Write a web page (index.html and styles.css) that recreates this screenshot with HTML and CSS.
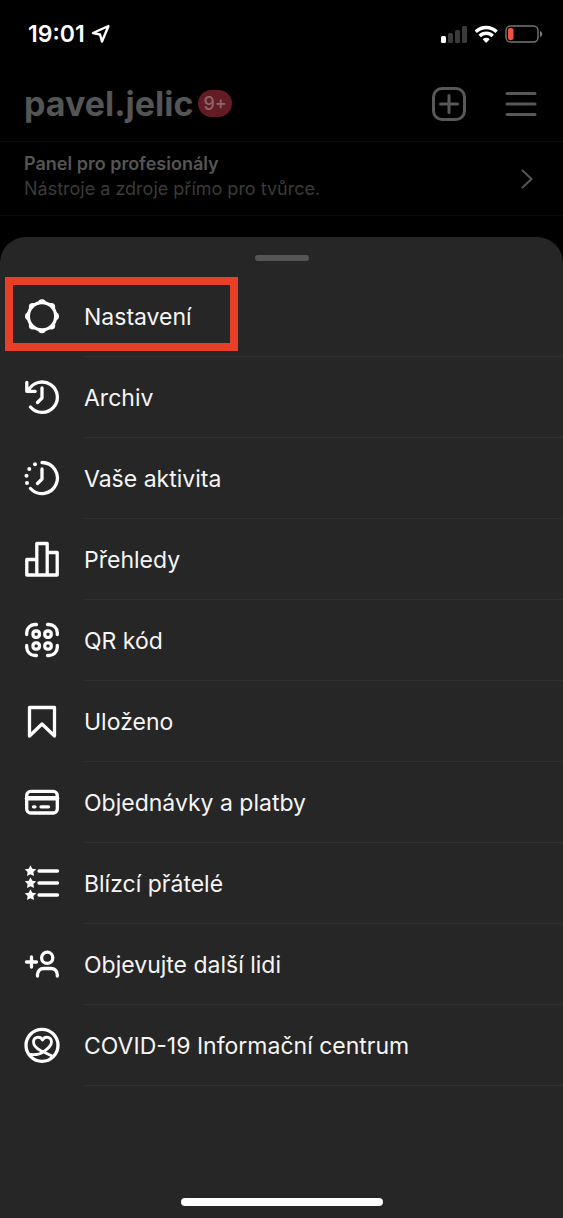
FILE: index.html
```html
<!DOCTYPE html>
<html lang="cs">
<head>
<meta charset="utf-8">
<meta name="viewport" content="width=device-width, initial-scale=1">
<title>pavel.jelic</title>
<link rel="stylesheet" href="styles.css">
</head>
<body>
<div class="screen">
  <div class="status">
    <div class="status-side">
      <span class="time">19:01</span>
      <svg width="20" height="20" viewBox="0 0 20 20" fill="none" stroke="#fff" stroke-width="2.400" stroke-linejoin="round"><path d="M17.500 2 2 9l7 1.500L11 17.500Z"/></svg>
    </div>
    <div class="status-side">
      <svg width="28" height="18" viewBox="0 0 28 18"><rect x="0" y="11" width="5" height="7" rx="1.500" fill="#fff"/><g fill="#3a3a3a"><rect x="7" y="8" width="5" height="10" rx="1.500"/><rect x="14" y="5" width="5" height="13" rx="1.500"/><rect x="21" y="1" width="5" height="17" rx="1.500"/></g></svg>
      <svg width="24" height="18" viewBox="0 0 24 18" fill="none" stroke="#fff" stroke-width="3.400"><path d="M.7 6.800a15 15 0 0 1 21 0M4.700 11a9.200 9.200 0 0 1 13 0"/><path d="M11.200 18l-3.500-3.700a5 5 0 0 1 7 0Z" fill="#fff" stroke="none"/></svg>
      <svg width="38" height="18" viewBox="0 0 38 18"><rect x="1" y="1" width="32" height="16" rx="4.500" fill="none" stroke="#777" stroke-width="1.400"/><rect x="3" y="3" width="5.500" height="12" rx="2" fill="#f15342"/><path d="M35 6c3 .8 3 5.200 0 6Z" fill="#777"/></svg>
    </div>
  </div>
  <header class="nav">
    <h1 class="name">pavel.jelic</h1>
    <span class="badge">9+</span>
    <div class="actions">
      <button class="icon-button" type="button" aria-label="Vytvořit"><svg width="34" height="34" viewBox="0 0 34 34" fill="none" stroke="#585858" stroke-width="3" stroke-linecap="round"><rect x="1.500" y="1.500" width="31" height="31" rx="8.500"/><path d="M17 8.500v17M8.500 17h17"/></svg></button>
      <button class="icon-button" type="button" aria-label="Nabídka"><svg width="32" height="34" viewBox="0 0 32 34" stroke="#585858" stroke-width="3" stroke-linecap="round"><path d="M2 6.500h28M2 17h28M2 27.500h28"/></svg></button>
    </div>
  </header>
  <a class="panel" href="#">
    <span class="panel-text"><strong class="panel-title">Panel pro profesionály</strong><span class="panel-sub">Nástroje a zdroje přímo pro tvůrce.</span></span>
    <svg width="12" height="20" viewBox="0 0 12 20" fill="none" stroke="#555" stroke-width="2" stroke-linecap="round"><path d="M1.500 1.500 10.500 10l-9 8.500"/></svg>
  </a>
  <main class="sheet">
    <div class="handle"></div>
    <ul class="menu">
      <li class="row marked"><button class="item" type="button">
        <svg class="icon" viewBox="0 0 36 36"><circle cx="18" cy="18.300" r="13.500" stroke-width="3.600"/><g class="solid"><circle cx="18" cy="5.300" r="4"/><circle cx="27.200" cy="9.100" r="4"/><circle cx="31" cy="18.300" r="4"/><circle cx="27.200" cy="27.500" r="4"/><circle cx="18" cy="31.300" r="4"/><circle cx="8.800" cy="27.500" r="4"/><circle cx="5" cy="18.300" r="4"/><circle cx="8.800" cy="9.100" r="4"/></g><circle class="hole" cx="18" cy="18.300" r="12"/></svg>
        <span class="label">Nastavení</span></button></li>
      <li class="row"><button class="item" type="button">
        <svg class="icon" viewBox="0 0 36 36"><path d="M6.500 28A15.200 15.200 0 1 0 4.500 11.500M2.800 3.500v8.800h8.400M18 9v10l-4.500 4.500"/></svg>
        <span class="label">Archiv</span></button></li>
      <li class="row"><button class="item" type="button">
        <svg class="icon" viewBox="0 0 36 36"><path d="M18 2.500a15.500 15.500 0 1 1-11.500 26M18 9v10l-4.500 4.500"/><g class="solid"><circle cx="11" cy="4.200" r="2"/><circle cx="5.300" cy="9" r="2"/><circle cx="2.500" cy="15.800" r="2"/><circle cx="3" cy="23" r="2"/></g></svg>
        <span class="label">Vaše aktivita</span></button></li>
      <li class="row"><button class="item" type="button">
        <svg class="icon" viewBox="0 0 36 36"><path d="M2.800 18.500h10V34h-10ZM12.800 2.500h10.400V34H12.800ZM23.200 11.500h10V34h-10Z"/></svg>
        <span class="label">Přehledy</span></button></li>
      <li class="row"><button class="item" type="button">
        <svg class="icon" viewBox="0 0 36 36"><path d="M12.500 2.500H11a8.300 8.300 0 0 0-8.300 8.300v1.700M23.500 2.500H25a8.300 8.300 0 0 1 8.300 8.300v1.700M12.500 33.500H11a8.300 8.300 0 0 1-8.300-8.300v-1.700M23.500 33.500H25a8.300 8.300 0 0 0 8.300-8.300v-1.700"/><rect x="9" y="9" width="6.400" height="6.400" rx="2.600"/><rect x="20.800" y="9" width="6.400" height="6.400" rx="2.600"/><rect x="9" y="20.800" width="6.400" height="6.400" rx="2.600"/><rect x="20.800" y="20.800" width="6.400" height="6.400" rx="2.600"/></svg>
        <span class="label">QR kód</span></button></li>
      <li class="row"><button class="item" type="button">
        <svg class="icon" viewBox="0 0 36 36"><path d="M5.500 4.500h25V33L18 21 5.500 33Z"/></svg>
        <span class="label">Uloženo</span></button></li>
      <li class="row"><button class="item" type="button">
        <svg class="icon" viewBox="0 0 36 36"><rect x="2.700" y="7.400" width="30.600" height="21.600" rx="4"/><path d="M3 14.200h30" stroke-width="4.500"/><path d="M9.500 22.800h1.500M17 22.800h7.500"/></svg>
        <span class="label">Objednávky a platby</span></button></li>
      <li class="row"><button class="item" type="button">
        <svg class="icon" viewBox="0 0 36 36"><path d="M15 6h18.500M15 18h18.500M15 30h18.500"/><g class="solid"><path id="star" d="M6.500.2l1.800 3.500 3.900.6-2.800 2.800.6 4-3.500-1.800L3 11.100l.6-4L.8 4.300l3.900-.6Z"/><use href="#star" y="12"/><use href="#star" y="24"/></g></svg>
        <span class="label">Blízcí přátelé</span></button></li>
      <li class="row"><button class="item" type="button">
        <svg class="icon" viewBox="0 0 36 36"><circle cx="23.200" cy="11.800" r="5.600"/><path d="M13.500 30v-1.500a6 6 0 0 1 6-6h7.800a6 6 0 0 1 6 6V30M7.500 11v10M2.500 16h10"/></svg>
        <span class="label">Objevujte další lidi</span></button></li>
      <li class="row"><button class="item" type="button">
        <svg class="icon" viewBox="0 0 36 36"><circle cx="18" cy="18.300" r="16"/><path stroke-width="2.800" d="M29 29.500 16.500 23.500C12.500 21.300 9.500 18 9.500 15c0-5 6.500-6.500 9-2 2.500-4.500 9-3 9 2 0 4-3.500 6.500-8 9.800-3.500 2.600-7 3.200-12.500 2.700"/></svg>
        <span class="label">COVID-19 Informační centrum</span></button></li>
    </ul>
    <div class="home"></div>
  </main>
</div>
</body>
</html>
```
FILE: styles.css
```css
*, *::after { box-sizing: border-box; }
body {
  margin: 0;
  background: #000;
  color: #f5f5f5;
  font-family: Inter, "Liberation Sans", sans-serif;
}
button {
  padding: 0;
  border: 0;
  background: none;
  color: inherit;
  font: inherit;
}
svg { display: block; flex: none; }
.screen {
  display: flex;
  flex-direction: column;
  min-height: 100vh;
}
.status {
  display: flex;
  justify-content: space-between;
  align-items: center;
  height: 68px;
  padding: 0 20px 0 28px;
}
.status-side { display: flex; align-items: center; gap: 6px; }
.time { color: #fff; font-size: 23px; font-weight: 600; }
.nav {
  display: flex;
  align-items: center;
  height: 74px;
  padding: 0 26px 2px 24px;
  border-bottom: 1px solid #0b0b0b;
}
.name {
  margin: 0;
  color: #555;
  font-size: 34px;
  font-weight: 700;
  line-height: 40px;
}
.badge {
  margin-left: 5px;
  padding: 0 5px;
  border-radius: 14px;
  background: #641c24;
  color: #8b6669;
  font-size: 18px;
  font-weight: 500;
  line-height: 27px;
}
.actions { display: flex; gap: 39px; margin-left: auto; }
.panel {
  display: flex;
  justify-content: space-between;
  align-items: center;
  height: 74px;
  margin-bottom: 21px;
  padding: 0 30px 0 24px;
  border-bottom: 1px solid #0b0b0b;
  color: #3b3b3b;
  text-decoration: none;
}
.panel-text { display: flex; flex-direction: column; padding-bottom: 6px; }
.panel-title { color: #555; font-size: 18px; font-weight: 600; line-height: 25px; }
.panel-sub { font-size: 18px; line-height: 25px; }
.sheet {
  display: flex;
  flex: 1;
  flex-direction: column;
  align-items: center;
  padding: 18px 0 12px;
  border-radius: 26px 26px 0 0;
  background: #262626;
}
.handle { width: 54px; height: 6px; border-radius: 3px; background: #555; }
.menu {
  align-self: stretch;
  margin: 15px 0 auto;
  padding: 0;
  list-style: none;
}
.row { position: relative; }
.marked::after {
  content: "";
  position: absolute;
  top: 1px;
  left: 5px;
  width: 233px;
  height: 74px;
  border: 8px solid #e84027;
  pointer-events: none;
}
.item {
  display: flex;
  align-items: center;
  gap: 24px;
  width: 100%;
  padding-left: 24px;
  text-align: left;
}
.icon {
  width: 36px;
  height: 36px;
  margin-bottom: 2px;
  fill: none;
  stroke: #fff;
  stroke-width: 3.3;
  stroke-linecap: round;
  stroke-linejoin: round;
}
.solid { fill: #fff; stroke: none; }
.hole { fill: #262626; stroke: none; }
.label {
  flex: 1;
  padding-top: 2px;
  border-bottom: 1px solid #303030;
  font-size: 23px;
  line-height: 78px;
}
.home {
  width: 202px;
  height: 8px;
  border-radius: 4px;
  background: #fff;
}
```
